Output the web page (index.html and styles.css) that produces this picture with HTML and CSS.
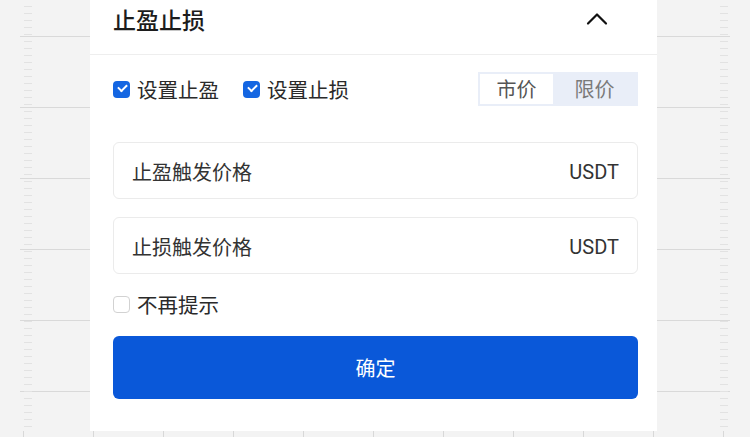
FILE: index.html
```html
<!DOCTYPE html>
<html lang="zh-CN">
<head>
<meta charset="utf-8">
<title>止盈止损</title>
<link rel="stylesheet" href="styles.css">
</head>
<body>
<div class="chart">
  <div class="axis axis_left"><div class="ticks"></div><div class="grid"></div></div>
  <div class="sheet">
    <div class="sheet_hd">
      <h2 class="sheet_tit">止盈止损</h2>
      <svg class="fold" width="24" height="24" viewBox="0 0 24 24"><path d="M3 16.5 L12 7.5 L21 16.5" fill="none" stroke="#111" stroke-width="2.2" stroke-linecap="round" stroke-linejoin="round"/></svg>
    </div>
    <div class="sheet_bd">
      <div class="opts">
        <label class="chk"><span class="box on"></span>设置止盈</label>
        <label class="chk"><span class="box on"></span>设置止损</label>
        <div class="seg">
          <span class="seg_item cur">市价</span>
          <span class="seg_item">限价</span>
        </div>
      </div>
      <div class="field"><span class="field_lab">止盈触发价格</span><span class="field_unit">USDT</span></div>
      <div class="field"><span class="field_lab">止损触发价格</span><span class="field_unit">USDT</span></div>
      <label class="chk tip"><span class="box"></span>不再提示</label>
      <button class="btn_ok" type="button">确定</button>
    </div>
  </div>
  <div class="axis axis_right"><div class="grid"></div><div class="ticks"></div></div>
</div>
<div class="chart_foot"></div>
</body>
</html>
```

FILE: styles.css
```css
* { margin:0; padding:0; box-sizing:border-box;}
body{ background:#f3f3f3; font:normal 20px/1.2 "Noto Sans CJK SC", "Noto Sans", sans-serif; color:#333; overflow:hidden;}

.chart{ display:flex; height:431px;}
.axis{ display:flex; height:100%;}
.axis .grid{ flex:1; background:repeating-linear-gradient(180deg, transparent 0, transparent 36px, #d9d9d9 36px, #d9d9d9 37px, transparent 37px, transparent 71px);}
.axis .ticks{ width:8px; background:repeating-linear-gradient(180deg, transparent 0, transparent 6px, #e2e2e2 6px, #e2e2e2 7px);}
.axis_left{ width:90px; padding-left:20px;}
.axis_left .ticks{ margin-left:4px; margin-right:-12px; position:relative; z-index:1;}
.axis_right{ flex:1; padding-right:22px;}
.axis_right .ticks{ margin-left:-10px;}
.chart_foot{ height:6px; background:repeating-linear-gradient(90deg, transparent 0, transparent 2px, #d8d8d8 2px, #d8d8d8 3px, transparent 3px, transparent 70px) 91px 0 / 70px 100% repeat-x;}

.sheet{ width:567px; background:#fff; padding-bottom:32px;}
.sheet_hd{ height:55px; display:flex; justify-content:space-between; align-items:flex-start; padding:0 24px 0 23px; border-bottom:1px solid #eeeeee;}
.sheet_tit{ font-size:23px; font-weight:500; line-height:38px; color:#1c1c1c;}
.fold{ margin-top:7px; margin-right:24px;}

.sheet_bd{ padding:17px 19px 0 23px;}
.opts{ display:flex; align-items:center; height:34px;}
.chk{ display:flex; align-items:center; font-size:20.5px; color:#2a2a2a; margin-right:24px;}
.box{ width:17px; height:17px; border-radius:4px; border:1.5px solid #d2d2d2; background:#fff; margin-right:7px; position:relative;}
.box.on{ border:none; background:#1466e2;}
.box.on:after{ content:""; position:absolute; left:4.5px; top:3.5px; width:7px; height:4px; border-left:2px solid #fff; border-bottom:2px solid #fff; transform:rotate(-45deg);}
.seg{ margin-left:auto; display:flex; width:160px; height:34px; padding:2px; background:#e9eef8;}
.seg_item{ flex:1; display:flex; align-items:center; justify-content:center; font-size:20px; color:#7a7a7a;}
.seg_item.cur{ flex:0 0 73px; background:#fff; color:#555;}

.field{ display:flex; justify-content:space-between; align-items:center; height:57px; margin-top:18px; padding:2px 18px 0 18px; border:1px solid #ebebeb; border-radius:6px;}
.opts + .field{ margin-top:36px;}
.field_lab{ font-size:20px; color:#333;}
.field_unit{ font-family:Roboto, "Liberation Sans", sans-serif; font-size:20px; color:#333;}

.tip{ margin-top:20px; height:20px;}
.btn_ok{ display:block; width:100%; height:63px; margin-top:22px; border:none; border-radius:6px; background:#0a58d9; color:#fff; font:normal 20px "Noto Sans CJK SC", sans-serif;}
```
